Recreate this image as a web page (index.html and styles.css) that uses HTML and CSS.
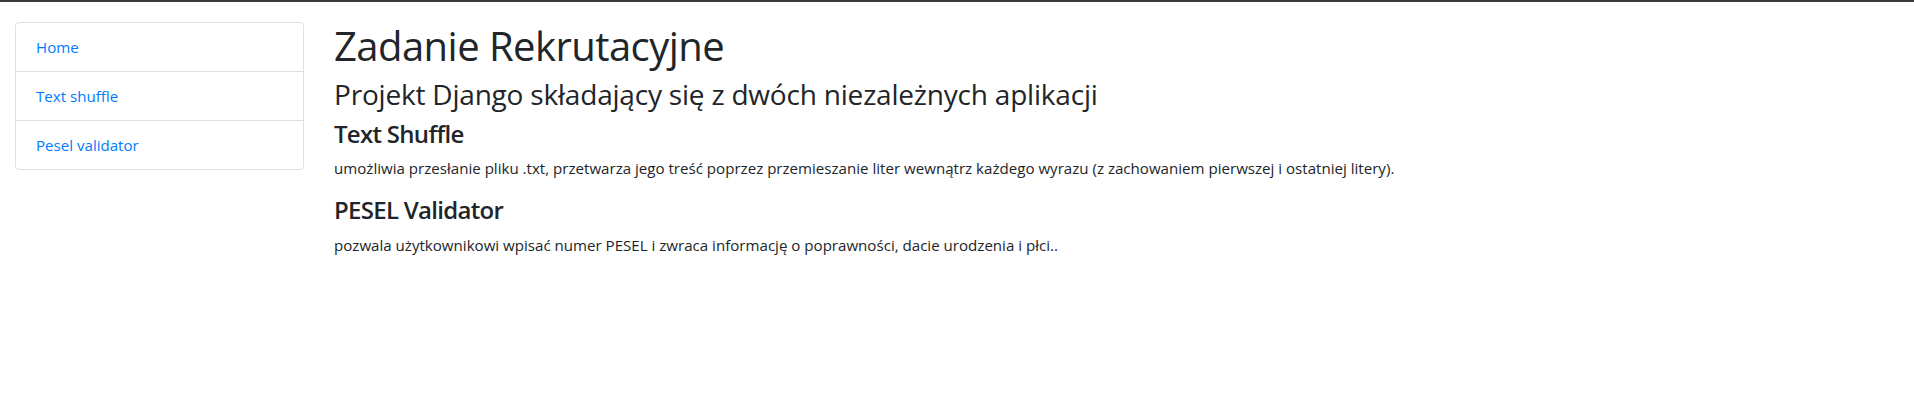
FILE: index.html
```html
<!DOCTYPE html>
<html lang="pl">
<head>
<meta charset="utf-8">
<title>Zadanie Rekrutacyjne</title>
<link rel="stylesheet" href="styles.css">
</head>
<body>
<div class="topbar"></div>
<div class="layout">
  <aside class="sidebar">
    <div class="list-group">
      <a class="list-item" href="#">Home</a>
      <a class="list-item" href="#">Text shuffle</a>
      <a class="list-item" href="#">Pesel validator</a>
    </div>
  </aside>
  <main class="content">
    <h1 class="title">Zadanie Rekrutacyjne</h1>
    <h3 class="subtitle">Projekt Django składający się z dwóch niezależnych aplikacji</h3>
    <h4 class="section">Text Shuffle</h4>
    <p class="desc">umożliwia przesłanie pliku .txt, przetwarza jego treść poprzez przemieszanie liter wewnątrz każdego wyrazu (z zachowaniem pierwszej i ostatniej litery).</p>
    <h4 class="section">PESEL Validator</h4>
    <p class="desc">pozwala użytkownikowi wpisać numer PESEL i zwraca informację o poprawności, dacie urodzenia i płci..</p>
  </main>
</div>
</body>
</html>
```
FILE: styles.css
```css
* { box-sizing: border-box; }
html, body { margin: 0; padding: 0; background: #fff; }
body {
  font-family: "Open Sans", "Noto Sans", sans-serif;
  font-size: 16px;
  line-height: 1.5;
  color: #212529;
}
.topbar { height: 2px; background: #3b3b3b; }
.layout { display: flex; padding-top: 20px; }
.sidebar { width: 319px; flex: 0 0 319px; padding: 0 15px; }
.list-group {
  display: flex;
  flex-direction: column;
  border: 1px solid #dfdfdf;
  border-radius: 4px;
}
.list-item {
  display: block;
  padding: 12px 20px;
  font-size: 15.1px;
  line-height: 24px;
  color: #007bff;
  text-decoration: none;
  border-top: 1px solid #dfdfdf;
}
.list-item:first-child { border-top: none; }
.content { flex: 1; padding: 0 15px; }
.title, .subtitle, .section { margin: 0 0 8px; line-height: 1.2; font-weight: 400; }
.title { font-size: 40px; letter-spacing: -0.55px; }
.subtitle { font-size: 28px; letter-spacing: -0.2px; }
.section { font-size: 24px; font-weight: 600; letter-spacing: -0.7px; }
.desc { margin: 0 0 16px; font-size: 15.1px; line-height: 24px; }
```
